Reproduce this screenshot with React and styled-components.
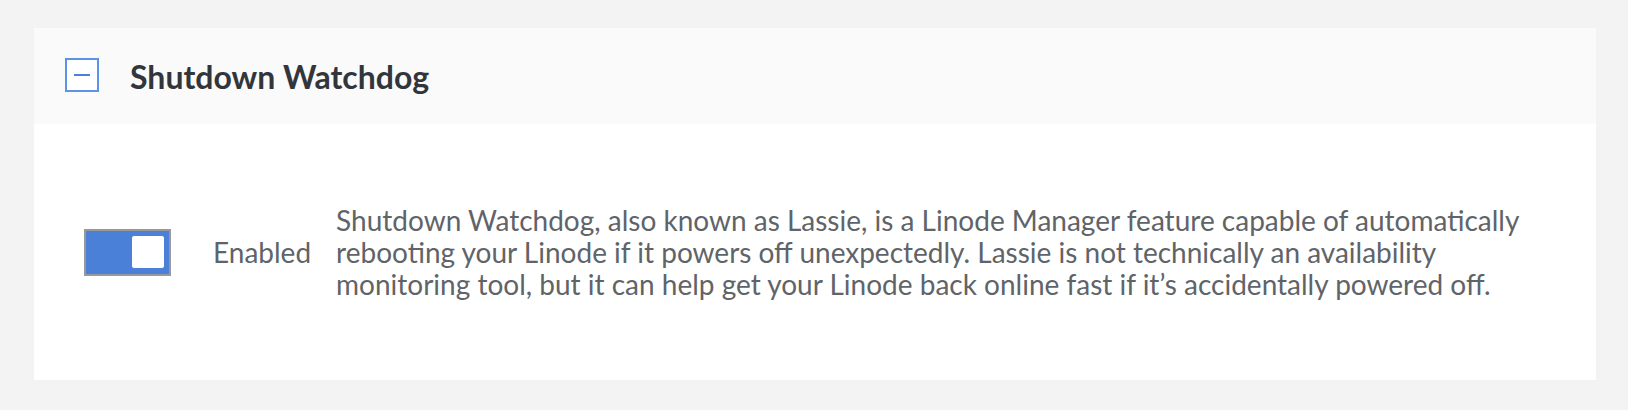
import React from 'react'
import styled, { createGlobalStyle } from 'styled-components'

const GlobalStyle = createGlobalStyle`
  html, body {
    margin: 0;
    padding: 0;
    background: #f3f3f3;
  }
  body {
    font-family: Lato, "Open Sans", sans-serif;
  }
`

const Page = styled.div`
  padding: 28px 32px 30px 34px;
  width: 1628px;
  height: 410px;
  box-sizing: border-box;
`

const Panel = styled.section`
  display: flex;
  flex-direction: column;
  height: 352px;
`

const Header = styled.div`
  display: flex;
  align-items: center;
  gap: 31px;
  height: 96px;
  padding-left: 31px;
  background: #fafafa;
`

const Collapse = styled.div`
  width: 34px;
  height: 34px;
  box-sizing: border-box;
  border: 2px solid #5b94e6;
  background: #fff;
  display: flex;
  align-items: center;
  justify-content: center;
  margin-top: -2px;

  &::after {
    content: '';
    width: 16px;
    height: 2px;
    background: #4a80d8;
  }
`

const Title = styled.h2`
  margin: 0;
  font-family: Lato, sans-serif;
  font-weight: 700;
  font-size: 32px;
  color: #32363c;
`

const Body = styled.div`
  flex: 1;
  background: #fff;
  display: flex;
  align-items: center;
  padding: 0 36px 0 50px;
`

const Toggle = styled.div`
  width: 87px;
  height: 47px;
  box-sizing: border-box;
  border: 2px solid #999;
  background: ${p => (p.on ? '#4a80d8' : '#ccc')};
  display: flex;
  align-items: center;
  justify-content: ${p => (p.on ? 'flex-end' : 'flex-start')};
  padding: 0 5px;
  flex-shrink: 0;
`

const Knob = styled.div`
  width: 32px;
  height: 32px;
  border-radius: 2px;
  background: #fff;
`

const Label = styled.span`
  margin-left: 42px;
  font-size: 28px;
  color: #606469;
  flex-shrink: 0;
`

const Description = styled.p`
  flex: 1;
  margin: 0 0 0 25px;
  font-size: 28px;
  line-height: 32px;
  color: #606469;
`

export default function App() {
  return (
    <>
      <GlobalStyle />
      <Page>
        <Panel>
          <Header>
            <Collapse />
            <Title>Shutdown Watchdog</Title>
          </Header>
          <Body>
            <Toggle on>
              <Knob />
            </Toggle>
            <Label>Enabled</Label>
            <Description>
              Shutdown Watchdog, also known as Lassie, is a Linode Manager feature capable of
              automatically rebooting your Linode if it powers off unexpectedly. Lassie is not
              technically an availability monitoring tool, but it can help get your Linode back
              online fast if it’s accidentally powered off.
            </Description>
          </Body>
        </Panel>
      </Page>
    </>
  )
}
